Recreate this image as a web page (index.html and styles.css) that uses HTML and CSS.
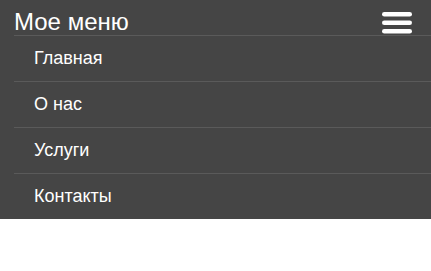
FILE: index.html
```html
<!DOCTYPE html>
<html lang="ru">
<head>
    <meta charset="UTF-8">
    <meta name="viewport" content="width=device-width, initial-scale=1.0">
    <title>Мое меню</title>
    <link rel="stylesheet" href="styles.css">
</head>
<body>
    <nav class="nav">
        <div class="header">
            <span class="logo">Мое меню</span>
            <button class="burger" aria-label="Меню">
                <svg width="30" height="22" viewBox="0 0 30 22">
                    <rect x="0" y="0" width="30" height="4.6" rx="2.3" fill="#fff"/>
                    <rect x="0" y="8.4" width="30" height="4.6" rx="2.3" fill="#fff"/>
                    <rect x="0" y="17" width="30" height="4.6" rx="2.3" fill="#fff"/>
                </svg>
            </button>
        </div>
        <ul class="menu">
            <li><a href="#">Главная</a></li>
            <li><a href="#">О нас</a></li>
            <li><a href="#">Услуги</a></li>
            <li><a href="#">Контакты</a></li>
        </ul>
    </nav>
</body>
</html>
```

FILE: styles.css
```css
* { margin: 0; padding: 0; box-sizing: border-box; }
body {
    font-family: "Liberation Sans", Arial, sans-serif;
    background: #fff;
    color: white;
}
.nav {
    background: #454545;
    padding-left: 14px;
}
.header {
    display: flex;
    justify-content: space-between;
    align-items: flex-start;
    height: 36px;
    padding-right: 19px;
    border-bottom: 1px solid #5a5a5a;
}
.logo {
    font-size: 24px;
    line-height: 24px;
    padding-top: 10px;
}
.burger {
    background: none;
    border: none;
    margin-top: 12px;
    line-height: 0;
}
.menu {
    list-style: none;
}
.menu li {
    height: 46px;
    border-bottom: 1px solid #5a5a5a;
}
.menu li:last-child {
    border-bottom: none;
    height: 45px;
}
.menu a {
    display: block;
    color: white;
    text-decoration: none;
    font-size: 18px;
    line-height: 45px;
    padding-left: 20px;
}
```
